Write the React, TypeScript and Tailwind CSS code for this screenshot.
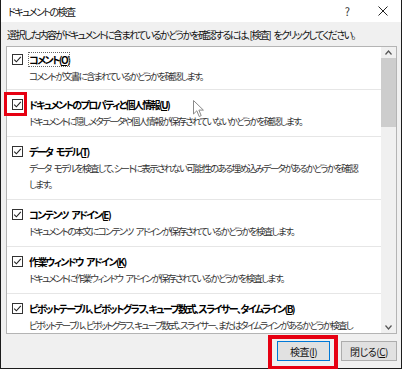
import React from 'react';

interface InspectItem {
    label: string;
    key: string;
    lines: string[];
}

const items: InspectItem[] = [
    { label: 'コメント', key: 'O', lines: ['コメントが文書に含まれているかどうかを確認します。'] },
    { label: 'ドキュメントのプロパティと個人情報', key: 'U', lines: ['ドキュメントに隠しメタデータや個人情報が保存されていないかどうかを確認します。'] },
    {
        label: 'データ モデル',
        key: 'T',
        lines: ['データ モデルを検査して、シートに表示されない可能性のある埋め込みデータがあるかどうかを確認', 'します。'],
    },
    { label: 'コンテンツ アドイン', key: 'E', lines: ['ドキュメントの本文にコンテンツ アドインが保存されているかどうかを検査します。'] },
    { label: '作業ウィンドウ アドイン', key: 'K', lines: ['ドキュメントに作業ウィンドウ アドインが保存されているかどうかを検査します。'] },
    {
        label: 'ピボットテーブル、ピボットグラフ、キューブ数式、スライサー、タイムライン',
        key: 'B',
        lines: [
            'ピボットテーブル、ピボットグラフ、キューブ数式、スライサー、またはタイムラインがあるかどうか検査し',
            'ます。これらには、シート上で非表示のデータが含まれる可能性があります。',
        ],
    },
];

// en space so that the gaps survive the tight tracking
const sp = (s: string) => s.replace(/ /g, '\u2002');

function CheckBox() {
    return (
        <div className="w-[11px] h-[11px] border border-[#333] bg-white flex items-center justify-center shrink-0">
            <svg width="9" height="9" viewBox="0 0 9 9" fill="none" stroke="#222" strokeWidth="1.1">
                <polyline points="1.2,4.6 3.4,6.8 7.8,1.8" />
            </svg>
        </div>
    );
}

function Cursor() {
    return (
        <svg className="absolute left-[186px] top-[10px]" width="12" height="18" viewBox="0 0 12 18">
            <path d="M0.5 0.5 L0.5 14 L3.8 10.8 L6.2 16.5 L8.2 15.6 L5.9 10.1 L10.4 10.1 Z" fill="#fff" stroke="#8a8a8a" strokeWidth="1" />
        </svg>
    );
}

export default function App() {
    return (
        <div className="w-[402px] h-[369px] flex flex-col bg-[#f0f0f0] border-x border-b border-[#1c1c1c] font-['Noto_Sans_CJK_JP','Noto_Sans',sans-serif] text-[10px] text-black [font-feature-settings:'palt'] tracking-[-1.6px]">
            {/* title bar */}
            <div className="h-[22px] bg-white flex items-center pl-[7px] shrink-0">
                <span className="text-[#111]">ドキュメントの検査</span>
                <span className="ml-auto mr-[28px] text-[11px] text-[#333] tracking-normal">?</span>
                <svg className="mr-[13px]" width="10" height="10" viewBox="0 0 10 10" stroke="#222" strokeWidth="1">
                    <line x1="0.5" y1="0.5" x2="9.5" y2="9.5" />
                    <line x1="9.5" y1="0.5" x2="0.5" y2="9.5" />
                </svg>
            </div>

            {/* instruction */}
            <div className="h-[24px] flex items-center pl-[6px] shrink-0 text-[#111] whitespace-nowrap">
                {sp('選択した内容がドキュメントに含まれているかどうかを確認するには、[検査] をクリックしてください。')}
            </div>

            {/* list box */}
            <div className="relative ml-[5px] mr-[4px] h-[288px] shrink-0">
                <div className="h-full border border-[#b4b4b4] bg-white flex overflow-hidden">
                    <div className="flex-1 flex flex-col overflow-hidden">
                        {items.map((item, i) => (
                            <div
                                key={item.key}
                                className={i === 0 ? 'relative flex pl-[5px] pt-[4px] pb-[5px]' : 'relative flex pl-[5px] pt-[6px] pb-[7px] border-t border-[#e6e6e6]'}
                            >
                                <div className="h-[17px] flex items-center">
                                    <CheckBox />
                                </div>
                                <div className="pl-[6px] flex flex-col">
                                    <div className="h-[17px] flex items-center">
                                        <span className={i === 0 ? 'font-bold leading-[13px] outline outline-1 outline-dotted outline-[#666]' : 'font-bold'}>
                                            {sp(item.label)}(<span className="underline">{item.key}</span>)
                                        </span>
                                    </div>
                                    {item.lines.map((line) => (
                                        <div key={line} className="h-[16px] flex items-center text-[#333] text-[9.5px] tracking-[-1.7px] whitespace-nowrap">
                                            {sp(line)}
                                        </div>
                                    ))}
                                </div>
                                {i === 1 && <Cursor />}
                            </div>
                        ))}
                    </div>

                    {/* scrollbar */}
                    <div className="w-[15px] flex flex-col bg-[#f0f0f0] shrink-0">
                        <div className="h-[11px] flex items-center justify-center">
                            <svg width="7" height="5" viewBox="0 0 7 5" fill="none" stroke="#555" strokeWidth="1.2">
                                <polyline points="0.5,4.5 3.5,1 6.5,4.5" />
                            </svg>
                        </div>
                        <div className="h-[69px] bg-[#cdcdcd]" />
                        <div className="flex-1" />
                        <div className="h-[12px] flex items-center justify-center">
                            <svg width="7" height="5" viewBox="0 0 7 5" fill="none" stroke="#555" strokeWidth="1.2">
                                <polyline points="0.5,0.5 3.5,4 6.5,0.5" />
                            </svg>
                        </div>
                    </div>
                </div>
                {/* red highlight over the second checkbox */}
                <div className="absolute left-[-2px] top-[46px] w-[23px] h-[24px] border-[3px] border-[#e60012]" />
            </div>

            {/* buttons */}
            <div className="flex-1 flex items-center justify-end gap-[11px] pr-[4px]">
                <div className="relative">
                    <button className="w-[53px] h-[20px] bg-[#e1e1e1] border border-[#0078d7] flex items-center justify-center text-[#111] tracking-[-0.5px]">
                        検査(<span className="underline">I</span>)
                    </button>
                    <div className="absolute -left-[9px] -right-[8px] -top-[6px] -bottom-[9px] border-[4px] border-[#e60012]" />
                </div>
                <button className="w-[56px] h-[20px] bg-[#e1e1e1] border border-[#adadad] flex items-center justify-center text-[#111] tracking-[-0.5px]">
                    閉じる(<span className="underline">C</span>)
                </button>
            </div>
        </div>
    );
}
